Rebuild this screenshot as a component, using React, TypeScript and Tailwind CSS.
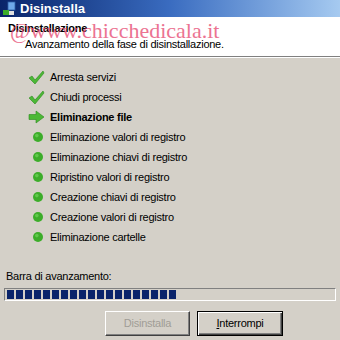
const steps = [
  { label: 'Arresta servizi', state: 'done' },
  { label: 'Chiudi processi', state: 'done' },
  { label: 'Eliminazione file', state: 'current' },
  { label: 'Eliminazione valori di registro', state: 'todo' },
  { label: 'Eliminazione chiavi di registro', state: 'todo' },
  { label: 'Ripristino valori di registro', state: 'todo' },
  { label: 'Creazione chiavi di registro', state: 'todo' },
  { label: 'Creazione valori di registro', state: 'todo' },
  { label: 'Eliminazione cartelle', state: 'todo' },
];

function StepIcon({ state }: { state: string }) {
  if (state === 'done') {
    return (
      <svg width="17" height="16" viewBox="0 0 17 16">
        <path d="M1 9 L4 7 L7 11 L15 2 L16 4 L7 15 Z" fill="#4cb836" stroke="#2a8a1c" strokeWidth="0.6" />
      </svg>
    );
  }
  if (state === 'current') {
    return (
      <svg width="17" height="14" viewBox="0 0 17 14">
        <path d="M1 4.5 H8 V1 L16 7 L8 13 V9.5 H1 Z" fill="#4cb836" stroke="#2a8a1c" strokeWidth="0.6" />
      </svg>
    );
  }
  return (
    <svg width="17" height="12" viewBox="0 0 17 12">
      <circle cx="10" cy="6" r="5" fill="#3cad2a" />
      <circle cx="8.8" cy="4.6" r="1.8" fill="#6fd45a" opacity="0.7" />
    </svg>
  );
}

function AppIcon() {
  return (
    <svg width="15" height="15" viewBox="0 0 15 15">
      <rect x="6" y="1" width="7" height="8" fill="#6fa8e8" stroke="#2d5fa8" strokeWidth="0.8" />
      <rect x="1" y="9" width="6" height="5" fill="#3cad2a" />
      <rect x="7" y="10" width="5" height="4" fill="#e0e0e0" />
    </svg>
  );
}

export default function App() {
  const blocks = Array.from({ length: 19 });

  return (
    <div className="w-[340px] h-[340px] bg-[#d4d0c8] flex flex-col text-[11px] tracking-[-0.25px] text-black overflow-hidden" style={{ fontFamily: '"Liberation Sans", Arial, sans-serif' }}>
      <div className="h-[17px] flex items-center gap-[3px] pl-[2px] bg-gradient-to-r from-[#0a246a] via-[#3a6cc0] to-[#a6caf0]">
        <AppIcon />
        <span className="text-white font-bold text-[13px] tracking-normal leading-none">Disinstalla</span>
      </div>

      <div className="relative h-[40px] bg-white border-b border-[#808080] pl-[8px] pt-[4px]">
        <div className="font-bold leading-[14px]">Disinstallazione</div>
        <div className="pl-[17px] leading-[14px] mt-[2px]">Avanzamento della fase di disinstallazione.</div>
        <div className="absolute left-[10px] top-[3px] text-[22px] tracking-normal leading-none text-[#e6456e] opacity-75 pointer-events-none" style={{ fontFamily: '"Liberation Serif", "Times New Roman", serif' }}>
          @www.chicchedicala.it
        </div>
      </div>
      <div className="h-px bg-white" />

      <div className="flex flex-col pt-[9px] pl-[28px]">
        {steps.map((s) => (
          <div key={s.label} className="h-[20px] flex items-center gap-[5px]">
            <div className="w-[17px] flex justify-center">
              <StepIcon state={s.state} />
            </div>
            <span className={s.state === 'current' ? 'font-bold' : ''}>{s.label}</span>
          </div>
        ))}
      </div>

      <div className="px-[4px] mt-[23px]">
        <div className="pl-[2px] leading-[13px]">Barra di avanzamento:</div>
        <div className="mt-[5px] h-[13px] border border-t-[#808080] border-l-[#808080] border-b-white border-r-white flex items-center gap-[2px] px-[2px]">
          {blocks.map((_, i) => (
            <div key={i} className="w-[7px] h-[9px] bg-[#0a246a]" />
          ))}
        </div>
      </div>

      <div className="flex gap-[7px] mt-[10px] pl-[105px]">
        <button className="w-[85px] h-[25px] bg-[#d4d0c8] text-[#a09d96] border border-t-white border-l-white border-b-[#404040] border-r-[#404040] shadow-[inset_-1px_-1px_0_#808080]">
          Disinstalla
        </button>
        <button className="w-[86px] h-[25px] bg-[#d4d0c8] border border-black shadow-[inset_1px_1px_0_#ffffff,inset_-1px_-1px_0_#404040,inset_-2px_-2px_0_#808080]">
          <span className="underline">I</span>nterrompi
        </button>
      </div>
    </div>
  );
}
